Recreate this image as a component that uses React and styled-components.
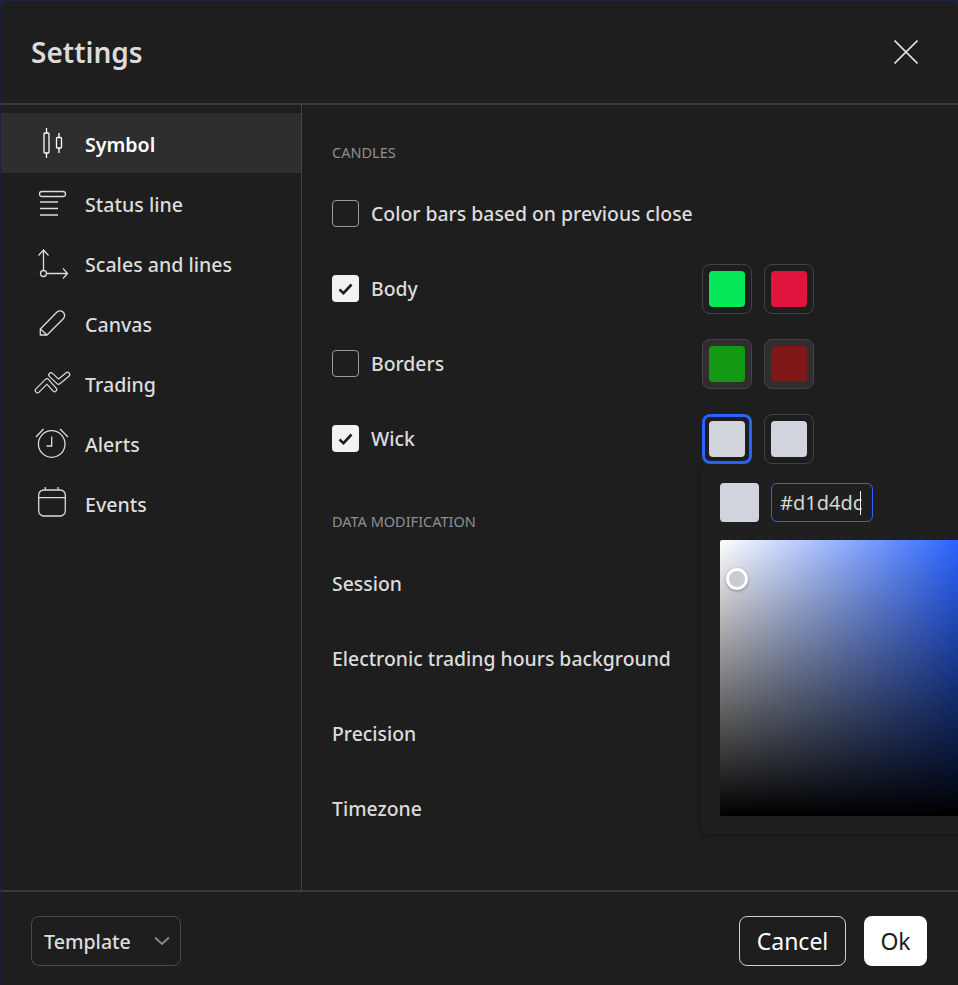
import React from "react";
import styled, { createGlobalStyle } from "styled-components";

const Global = createGlobalStyle`
  html, body { margin: 0; padding: 0; background: #1a2147; }
  body { width: 958px; height: 985px; overflow: hidden; }
  * { box-sizing: border-box; }
`;
const FONT = `"Noto Sans", "Liberation Sans", sans-serif`;

const Dialog = styled.div`
  width: 958px; height: 985px; padding: 1px 0 0 1px;
  background: #1a2147; font-family: ${FONT}; color: #dbdbdb; overflow: hidden;
`;
const Panel = styled.div`
  width: 957px; height: 984px; background: #1e1e1e; border-radius: 6px 6px 0 0;
  display: flex; flex-direction: column; position: relative; overflow: hidden;
`;
const Header = styled.header`
  height: 104px; flex: none; display: flex; align-items: center; justify-content: space-between;
  padding: 0 40px 0 30px; border-bottom: 2px solid #3a3a3a;
`;
const Title = styled.h1`
  margin: 0; font-size: 28px; font-weight: 600; color: #dbdbdb; line-height: 34px;
`;
const Body = styled.div`display: flex; flex: 1; min-height: 0;`;
const Side = styled.nav`
  width: 301px; flex: none; border-right: 1px solid #434343; padding-top: 8px;
`;
const NavRow = styled.div`
  height: 60px; display: flex; align-items: center; font-size: 19.6px;
  background: ${p => (p.$active ? "#2e2e2e" : "transparent")};
  color: ${p => (p.$active ? "#fff" : "#dcdcdc")};
  font-weight: ${p => (p.$active ? 600 : 500)};
`;
const NavIcon = styled.span`
  width: 84px; flex: none; padding-left: 31px;
  svg { display: block; fill: none; stroke: currentColor; stroke-width: 1.3; }
`;
const NavLabel = styled.span`padding-top: 2px;`;
const Content = styled.main`flex: 1; padding: 37px 0 0 30px;`;
const Section = styled.div`
  font-size: 14.5px; color: #8f8f8f; line-height: 20px; text-transform: uppercase;
`;
const Rows = styled.div`margin-top: ${p => p.$gap}px;`;
const Row = styled.div`
  height: 75px; display: flex; align-items: center; font-size: 19.4px; font-weight: 500; color: #dcdcdc;
`;
const Box = styled.span`
  width: 27px; height: 27px; border-radius: 4px; flex: none; margin-right: 12px;
  display: flex; align-items: center; justify-content: center;
  background: ${p => (p.$on ? "#f2f2f2" : "transparent")};
  border: ${p => (p.$on ? "none" : "1px solid #9a9a9a")};
`;
const Swatches = styled.div`margin-left: auto; margin-right: 144px; display: flex; gap: 12px;`;
const Swatch = styled.span`
  width: 50px; height: 50px; border-radius: 8px; display: flex; align-items: center; justify-content: center;
  border: ${p => (p.$focus ? "3px solid #2962ff" : "1px solid #434343")};
  background: ${p => (p.$dim ? "#2e2e2e" : "#1e1e1e")};
  i { display: block; width: 36px; height: 36px; border-radius: 4px; background: ${p => p.$c}; }
`;
const Section2 = styled(Section)`margin-top: 35px;`;
const Popup = styled.div`
  position: absolute; left: 700px; top: 464px; width: 320px; height: 369px; padding: 18px 19px;
  background: #1f1f1f; border-radius: 8px; box-shadow: 0 2px 6px rgba(0,0,0,.25);
`;
const Top = styled.div`display: flex; gap: 12px;`;
const Preview = styled.span`width: 39px; height: 39px; border-radius: 4px; background: #d1d4dc;`;
const Hex = styled.div`
  width: 102px; height: 39px; border: 1px solid #2962ff; border-radius: 6px;
  font-size: 20px; color: #d6d6d6; display: flex; align-items: center; padding-left: 8px; line-height: 24px;
`;
const Caret = styled.span`display: inline-block; width: 1px; height: 24px; background: #eee; margin-left: -2px;`;
const Picker = styled.div`
  position: relative; margin-top: 18px; width: 240px; height: 276px; border-radius: 2px;
  background: linear-gradient(to top, #000, rgba(0,0,0,0)), linear-gradient(to right, #fff, #2962ff);
`;
const Handle = styled.span`
  position: absolute; left: 6px; top: 28px; width: 22px; height: 22px; border-radius: 50%;
  border: 3.5px solid #fff; background: #c9cbd2; box-shadow: 0 1px 3px rgba(0,0,0,.35);
`;
const Footer = styled.footer`
  height: 95px; flex: none; border-top: 2px solid #3a3a3a; display: flex; align-items: center;
  justify-content: space-between; padding: 5px 31px 0 30px;
`;
const Select = styled.div`
  width: 150px; height: 50px; border: 1px solid #4a4a4a; border-radius: 8px; display: flex; align-items: center;
  justify-content: space-between; padding: 0 10px 0 12px; font-size: 19.6px; font-weight: 500; color: #dcdcdc;
`;
const Actions = styled.div`display: flex; gap: 18px;`;
const Button = styled.button`
  height: 50px; width: ${p => p.$w}px; border-radius: 8px; font-family: ${FONT}; font-size: 23px; padding: 0;
  background: ${p => (p.$primary ? "#fff" : "transparent")};
  color: ${p => (p.$primary ? "#1e1e1e" : "#fff")};
  border: ${p => (p.$primary ? "none" : "1px solid #d0d0d0")};
`;

const Ic = ({ cy, children }) => (
  <svg width="40" height="40" viewBox={`32 ${cy - 20} 40 40`}>{children}</svg>
);
const Zig = ({ points }) => (
  <>
    <polyline points={points} strokeWidth="5.6" strokeLinecap="round" strokeLinejoin="round" />
    <polyline points={points} strokeWidth="3.2" stroke="#1e1e1e" strokeLinecap="round" strokeLinejoin="round" />
  </>
);
const Icons = {
  symbol: (
    <Ic cy={143}>
      <rect x="44" y="133" width="5" height="20" rx="1" />
      <path d="M46.5 128v5M46.5 153v5M59 133v4.500M59 148v5" />
      <rect x="56.5" y="137.5" width="5" height="10.500" rx="1" />
    </Ic>
  ),
  status: (
    <Ic cy={203}>
      <rect x="39.500" y="191.500" width="26" height="5" rx="2.500" />
      <path d="M40 202h18M40 208.500h18M40 215h18" />
    </Ic>
  ),
  scales: (
    <Ic cy={263}>
      <path d="M43.500 270.500V250M38.500 255.500 43.500 250l5 5.500M46.500 273.500h21M63 268.500l4.500 5-4.500 5" />
      <circle cx="43.500" cy="273.500" r="3" />
    </Ic>
  ),
  canvas: (
    <Ic cy={323}>
      <path d="M40.300 329 56.500 312.500A4.500 4.500 0 0 1 63.500 318.500L47 335H40.300ZM41 329.500 46.500 334.500" />
    </Ic>
  ),
  trading: (
    <Ic cy={383}>
      <Zig points="51,375 58.500,382 67.500,374.500" />
      <Zig points="37.500,390.500 47,381 54.500,389.500" />
    </Ic>
  ),
  alerts: (
    <Ic cy={443}>
      <circle cx="51.700" cy="444" r="13.300" />
      <path d="M51.700 436.500V446H46.500M36 437l7.500-8M60 429l8 8" />
    </Ic>
  ),
  events: (
    <Ic cy={503}>
      <rect x="38.700" y="490" width="26.600" height="26" rx="5" />
      <path d="M38.700 497.700h26.600M45.300 487v3M58 487v3" />
    </Ic>
  ),
};

const Check = () => (
  <svg width="15" height="12" viewBox="0 0 15 12" fill="none" stroke="#1e1e1e" strokeWidth="2.6">
    <path d="M1.500 6.500 5.500 10.200 13.500 1.500" />
  </svg>
);

const nav = [
  ["symbol", "Symbol"], ["status", "Status line"], ["scales", "Scales and lines"],
  ["canvas", "Canvas"], ["trading", "Trading"], ["alerts", "Alerts"], ["events", "Events"],
];

export default function App() {
  return (
    <Dialog>
      <Global />
      <Panel>
        <Header>
          <Title>Settings</Title>
          <svg width="24" height="24" viewBox="0 0 24 24" fill="none" stroke="#e0e0e0" strokeWidth="1.6">
            <path d="M.5.5l23 23M23.500.5l-23 23" />
          </svg>
        </Header>
        <Body>
          <Side>
            {nav.map(([k, label], i) => (
              <NavRow key={k} $active={i === 0}>
                <NavIcon>{Icons[k]}</NavIcon>
                <NavLabel>{label}</NavLabel>
              </NavRow>
            ))}
          </Side>
          <Content>
            <Section>Candles</Section>
            <Rows $gap={14}>
              <Row><Box />Color bars based on previous close</Row>
              <Row>
                <Box $on><Check /></Box>Body
                <Swatches>
                  <Swatch $c="#06e85a"><i /></Swatch>
                  <Swatch $c="#e0143c"><i /></Swatch>
                </Swatches>
              </Row>
              <Row>
                <Box />Borders
                <Swatches>
                  <Swatch $dim $c="#149914"><i /></Swatch>
                  <Swatch $dim $c="#7e1717"><i /></Swatch>
                </Swatches>
              </Row>
              <Row>
                <Box $on><Check /></Box>Wick
                <Swatches>
                  <Swatch $focus $c="#d1d4dc"><i /></Swatch>
                  <Swatch $c="#d1d4dc"><i /></Swatch>
                </Swatches>
              </Row>
            </Rows>
            <Section2>Data modification</Section2>
            <Rows $gap={15}>
              <Row>Session</Row>
              <Row>Electronic trading hours background</Row>
              <Row>Precision</Row>
              <Row>Timezone</Row>
            </Rows>
          </Content>
        </Body>
        <Footer>
          <Select>
            Template
            <svg width="16" height="10" viewBox="0 0 16 10" fill="none" stroke="#8a8a8a" strokeWidth="1.8">
              <path d="M1 1.500 8 8l7-6.500" />
            </svg>
          </Select>
          <Actions>
            <Button $w={107}>Cancel</Button>
            <Button $primary $w={63}>Ok</Button>
          </Actions>
        </Footer>
        <Popup>
          <Top>
            <Preview />
            <Hex>#d1d4dc<Caret /></Hex>
          </Top>
          <Picker><Handle /></Picker>
        </Popup>
      </Panel>
    </Dialog>
  );
}
